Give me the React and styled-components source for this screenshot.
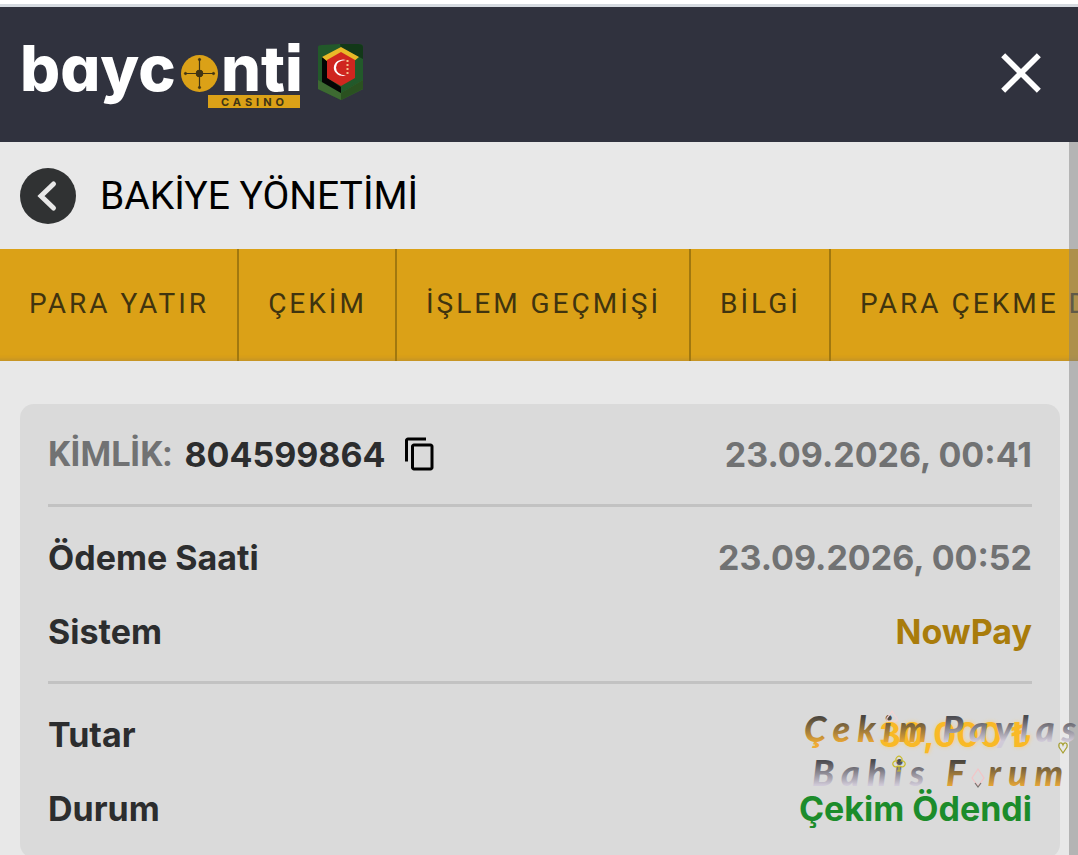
import React, { useState } from 'react';
import styled, { createGlobalStyle } from 'styled-components';
import { MdClose, MdContentCopy } from 'react-icons/md';

const GlobalStyle = createGlobalStyle`
  * {
    box-sizing: border-box;
  }
  html {
    scrollbar-width: none;
  }
  body {
    margin: 0;
    overflow-x: hidden;
    background: #e8e8e8;
    font-family: Roboto, 'Noto Sans', sans-serif;
    color: #2c2d2e;
  }
  button {
    padding: 0;
    border: none;
    background: none;
    font: inherit;
    color: inherit;
    cursor: pointer;
  }
`;

const Page = styled('div')`
  min-height: 100vh;
  border-top: 4px solid #ffffff;
`;

const Header = styled('header')`
  display: flex;
  align-items: center;
  justify-content: space-between;
  height: 138px;
  padding: 0 23px 4px 20px;
  border-top: 3px solid #d5dae0;
  background: #30323e;
  color: #ffffff;
`;

const Brand = styled('a')`
  display: flex;
  color: inherit;
`;

const LogoArt = styled('svg')`
  overflow: visible;
  font-family: Inter, sans-serif;
`;

const LogoName = styled('text')`
  font-size: 63px;
  font-weight: 800;
  font-feature-settings: 'cv11', 'ss07';
  fill: #ffffff;
`;

const LogoTag = styled('text')`
  font-size: 11px;
  font-weight: 700;
  letter-spacing: 4px;
  fill: #403414;
`;

const CloseButton = styled('button')`
  display: flex;
`;

const Content = styled('main')`
  position: relative;
  overflow: hidden;
`;

const ScrollTrack = styled('div')`
  position: absolute;
  top: 0;
  right: 0;
  bottom: 0;
  width: 9px;
  background: rgba(128, 128, 128, 0.5);
`;

const TitleBar = styled('div')`
  display: flex;
  align-items: center;
  gap: 24px;
  height: 107px;
  padding: 0 20px;
`;

const BackButton = styled('button')`
  display: flex;
`;

const Title = styled('h1')`
  margin: 0;
  font-size: 39px;
  font-weight: 400;
  line-height: 48px;
  color: #000000;
`;

const Tabs = styled('nav')`
  display: flex;
  height: 112px;
  overflow: hidden;
  background: #dba117;
  box-shadow: inset 0 -7px 4px -5px #c1922a;
`;

const Tab = styled('button')`
  flex: none;
  padding: 0 28px 4px 29px;
  border-right: 2px solid #a1780f;
  font-size: 28px;
  letter-spacing: 3px;
  white-space: nowrap;
  color: #40340f;
`;

const Card = styled('section')`
  position: relative;
  margin: 43px 18px 20px 20px;
  padding: 0 28px;
  border-radius: 14px;
  background: #dadada;
  font-family: Inter, 'Noto Sans', sans-serif;
  font-size: 34px;
  font-weight: 700;
`;

const Group = styled('div')`
  padding: 13px 0;
  & + & {
    border-top: 3px solid #c2c2c2;
  }
`;

const Row = styled('div')`
  display: flex;
  align-items: center;
  justify-content: space-between;
  height: 74px;
`;

const Identity = styled('div')`
  display: flex;
  align-items: center;
  gap: 12px;
`;

const IdLabel = styled('span')`
  font-family: Roboto, sans-serif;
  font-size: 35px;
  color: #717273;
`;

const Value = styled('span')`
  color: ${(props) => props.$color || '#717273'};
  text-shadow: ${(props) => (props.$glow ? `0 0 4px ${props.$glow}` : 'none')};
`;

const CopyButton = styled('button')`
  display: flex;
  margin-left: 4px;
  color: #000000;
`;

const Watermark = styled('div')`
  position: absolute;
  right: -18px;
  bottom: 64px;
  pointer-events: none;
`;

const WatermarkSvg = styled('svg')`
  display: block;
  overflow: visible;
  font-family: Lato, sans-serif;
  font-size: 36px;
  font-style: italic;
  font-weight: 900;
  letter-spacing: 7px;
`;

const status = {
  id: '804599864',
  created: '23.09.2026, 00:41',
  paid: '23.09.2026, 00:52',
  system: 'NowPay',
  amount: '30,000 ₺',
  state: 'Çekim Ödendi',
};

const tabs = ['PARA YATIR', 'ÇEKİM', 'İŞLEM GEÇMİŞİ', 'BİLGİ', 'PARA ÇEKME DURUMU'];

const Logo = () => (
  <LogoArt width="350" height="80" viewBox="0 0 350 80" role="img" aria-label="bayconti casino">
    <LogoName x="0" y="58">bayc</LogoName>
    <LogoName x="201" y="58">nti</LogoName>
    <circle cx="179.5" cy="40.5" r="18.5" fill="#dba117" />
    <g stroke="#403414" fill="#403414">
      <path d="M165 40.5h29M179.500 26v29" strokeWidth="1.2" />
      <circle cx="179.5" cy="40.5" r="3.4" />
      <circle cx="165.5" cy="40.5" r="1.1" />
      <circle cx="193.5" cy="40.5" r="1.1" />
      <circle cx="179.5" cy="26.5" r="1.1" />
      <circle cx="179.5" cy="54.5" r="1.1" />
    </g>
    <rect x="188" y="62" width="92" height="13" fill="#dba117" />
    <LogoTag x="201" y="73">CASINO</LogoTag>
    {/* hexagonal flag badge */}
    <path d="M298 14q0-2 4-2l18-1h18q5 0 5 3v42l-22 11-23-11z" fill="#22592a" />
    <path d="M320 11h18q5 0 5 3v12l-22-11z" fill="#123818" />
    <path d="M298 47l23 13 22-13v9l-22 11-23-11z" fill="#3d6a31" />
    <path d="M321 60l22-13v9l-22 11z" fill="#2a5120" />
    <path d="M302 24l7 4v18l12 8v6l-19-11z" fill="#050505" />
    <path d="M302 24l19-10 18 10-6 5-12-7-13 7z" fill="#e9b928" />
    <path d="M321 19l14 8v18l-14 8-14-8V27z" fill="#cf261f" />
    <path d="M326 27a9.2 8.2 0 1 0 0 15.500q-10-1-10-8t10-7.500z" fill="#ffffff" />
    <path d="M327.500 27v14" stroke="#f3c08a" strokeWidth="2" strokeDasharray="2 2" />
  </LogoArt>
);

const BackIcon = () => (
  <svg width="56" height="56" viewBox="0 0 56 56" fill="none">
    <circle cx="28" cy="28" r="28" fill="#303233" />
    <path d="M33.500 16L21 28L33.500 40" stroke="#e8e8e8" strokeWidth="5" strokeLinecap="round" />
  </svg>
);

const WatermarkArt = () => (
  <WatermarkSvg width="274" height="88" viewBox="0 0 274 88">
    <defs>
      <linearGradient id="golden" x1="0" y1="0" x2="0" y2="1">
        <stop offset="25%" stopColor="#4a4640" />
        <stop offset="85%" stopColor="#efab35" />
      </linearGradient>
      <linearGradient id="silver" x1="0" y1="0" x2="0" y2="1">
        <stop offset="25%" stopColor="#4b4b50" />
        <stop offset="80%" stopColor="#d0cad8" />
      </linearGradient>
    </defs>
    <text x="0" y="36" fill="url(#golden)">Çekim</text>
    <text x="138" y="36" fill="url(#silver)">Paylas</text>
    <text x="8" y="80" fill="url(#silver)">Bahis</text>
    <text x="142" y="80" fill="url(#golden)">F</text>
    <text x="184" y="80" fill="url(#golden)">rum</text>
    <g fill="none" strokeWidth="1.2">
      {/* card suits */}
      <path d="M88 5q2 4 5 7q1 4-3 3h-4q-4 1-3-3q3-3 5-7z" stroke="#f1d3d3" />
      <path d="M174 63l6 9-6 8-6-8z" stroke="#f3c4c6" />
      <path d="M171 77l3 4 3-4" stroke="#77736f" />
      <path
        d="M95 60v5M93 65h4M92.500 55a3 3 0 1 1 5 0a3 3 0 1 1-1.500 5h-2a3 3 0 1 1-1.500-5z"
        stroke="#c9bb2a"
      />
      <path d="M259 47l-4-6c-1-5 3-5 4-2c1-3 5-3 4 2z" stroke="#a7a032" />
    </g>
  </WatermarkSvg>
);

const App = () => {
  const [active, setActive] = useState(tabs[1]);

  const onTabClicked = (tab) => () => setActive(tab);

  return (
    <Page>
      <GlobalStyle />
      <Header>
        <Brand href="#">
          <Logo />
        </Brand>
        <CloseButton aria-label="Kapat">
          <MdClose size={68} />
        </CloseButton>
      </Header>
      <Content>
        <TitleBar>
          <BackButton aria-label="Geri">
            <BackIcon />
          </BackButton>
          <Title>BAKİYE YÖNETİMİ</Title>
        </TitleBar>
        <Tabs>
          {tabs.map((tab) => (
            <Tab key={tab} aria-pressed={tab === active} onClick={onTabClicked(tab)}>
              {tab}
            </Tab>
          ))}
        </Tabs>
        <ScrollTrack />
        <Card>
          <Group>
            <Row>
              <Identity>
                <IdLabel>KİMLİK:</IdLabel>
                <span>{status.id}</span>
                <CopyButton aria-label="Kopyala">
                  <MdContentCopy size={36} />
                </CopyButton>
              </Identity>
              <Value>{status.created}</Value>
            </Row>
          </Group>
          <Group>
            <Row>
              <span>Ödeme Saati</span>
              <Value>{status.paid}</Value>
            </Row>
            <Row>
              <span>Sistem</span>
              <Value $color="#a97c0b">{status.system}</Value>
            </Row>
          </Group>
          <Group>
            <Row>
              <span>Tutar</span>
              <Value $color="#f9b926" $glow="#f5cf80">{status.amount}</Value>
            </Row>
            <Row>
              <span>Durum</span>
              <Value $color="#1c8c2b">{status.state}</Value>
            </Row>
          </Group>
          <Watermark>
            <WatermarkArt />
          </Watermark>
        </Card>
      </Content>
    </Page>
  );
};

export default App;
